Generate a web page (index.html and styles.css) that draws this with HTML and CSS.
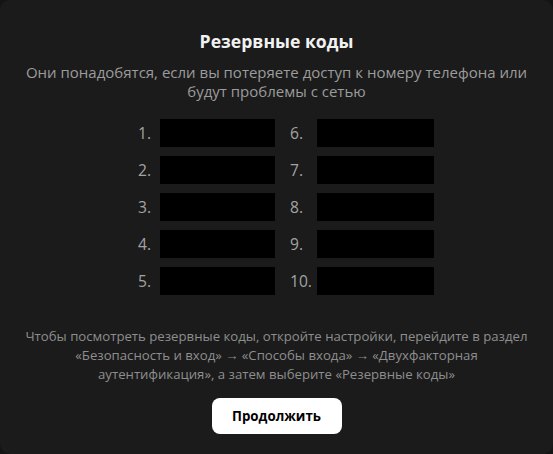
FILE: index.html
```html
<!DOCTYPE html>
<html lang="ru">
<head>
    <meta charset="UTF-8">
    <meta name="viewport" content="width=device-width, initial-scale=1.0">
    <title>Резервные коды</title>
    <link rel="stylesheet" href="styles.css">
</head>
<body>

    <div class="dialog">
        <h1 class="title">Резервные коды</h1>
        <p class="subtitle">Они понадобятся, если вы потеряете доступ к номеру телефона или будут проблемы с сетью</p>

        <div class="codes">
            <div class="code"><span class="num">1.</span><span class="mask"></span></div>
            <div class="code right"><span class="num">6.</span><span class="mask"></span></div>
            <div class="code"><span class="num">2.</span><span class="mask"></span></div>
            <div class="code right"><span class="num">7.</span><span class="mask"></span></div>
            <div class="code"><span class="num">3.</span><span class="mask"></span></div>
            <div class="code right"><span class="num">8.</span><span class="mask"></span></div>
            <div class="code"><span class="num">4.</span><span class="mask"></span></div>
            <div class="code right"><span class="num">9.</span><span class="mask"></span></div>
            <div class="code"><span class="num">5.</span><span class="mask"></span></div>
            <div class="code right"><span class="num">10.</span><span class="mask"></span></div>
        </div>

        <p class="hint">Чтобы посмотреть резервные коды, откройте настройки, перейдите в раздел «Безопасность и вход» → «Способы входа» → «Двухфакторная аутентификация», а затем выберите «Резервные коды»</p>

        <button class="btn">Продолжить</button>
    </div>

</body>
</html>
```

FILE: styles.css
```css
/* Global */
body {
    margin: 0;
    padding: 0;
    width: 553px;
    height: 454px;
    background-color: #141414;
    font-family: "Open Sans", "Noto Sans", sans-serif;
    overflow: hidden;
}

/* Dialog */
.dialog {
    height: 454px;
    box-sizing: border-box;
    background-color: #1b1b1b;
    border-radius: 10px;
    display: flex;
    flex-direction: column;
    align-items: center;
    padding-top: 29px;
}

.title {
    margin: 0;
    font-size: 17.6px;
    line-height: 24px;
    font-weight: 700;
    color: #f2f2f2;
}

.subtitle {
    margin: 10px 0 0;
    width: 515px;
    text-align: center;
    font-size: 15px;
    line-height: 19px;
    color: #9c9c9c;
}

/* Codes grid */
.codes {
    margin-top: 13px;
    align-self: flex-start;
    margin-left: 138px;
    display: grid;
    grid-template-columns: 152px 144px;
    grid-template-rows: repeat(5, 37px);
}

.code {
    display: flex;
    align-items: center;
}

.num {
    width: 22px;
    font-size: 15.6px;
    color: #a3a3a3;
}

.right .num { width: 27px; }

.mask {
    width: 115px;
    height: 28px;
    background-color: #000;
}

.right .mask { width: 117px; }

/* Footer hint */
.hint {
    margin: 28px 0 0;
    width: 515px;
    text-align: center;
    font-size: 13.2px;
    line-height: 19px;
    color: #8e8e8e;
}

.btn {
    margin-top: 14px;
    width: 130px;
    height: 36px;
    border: none;
    border-radius: 8px;
    background-color: #fff;
    color: #000;
    font-family: inherit;
    font-size: 13.3px;
    font-weight: 700;
}
```
